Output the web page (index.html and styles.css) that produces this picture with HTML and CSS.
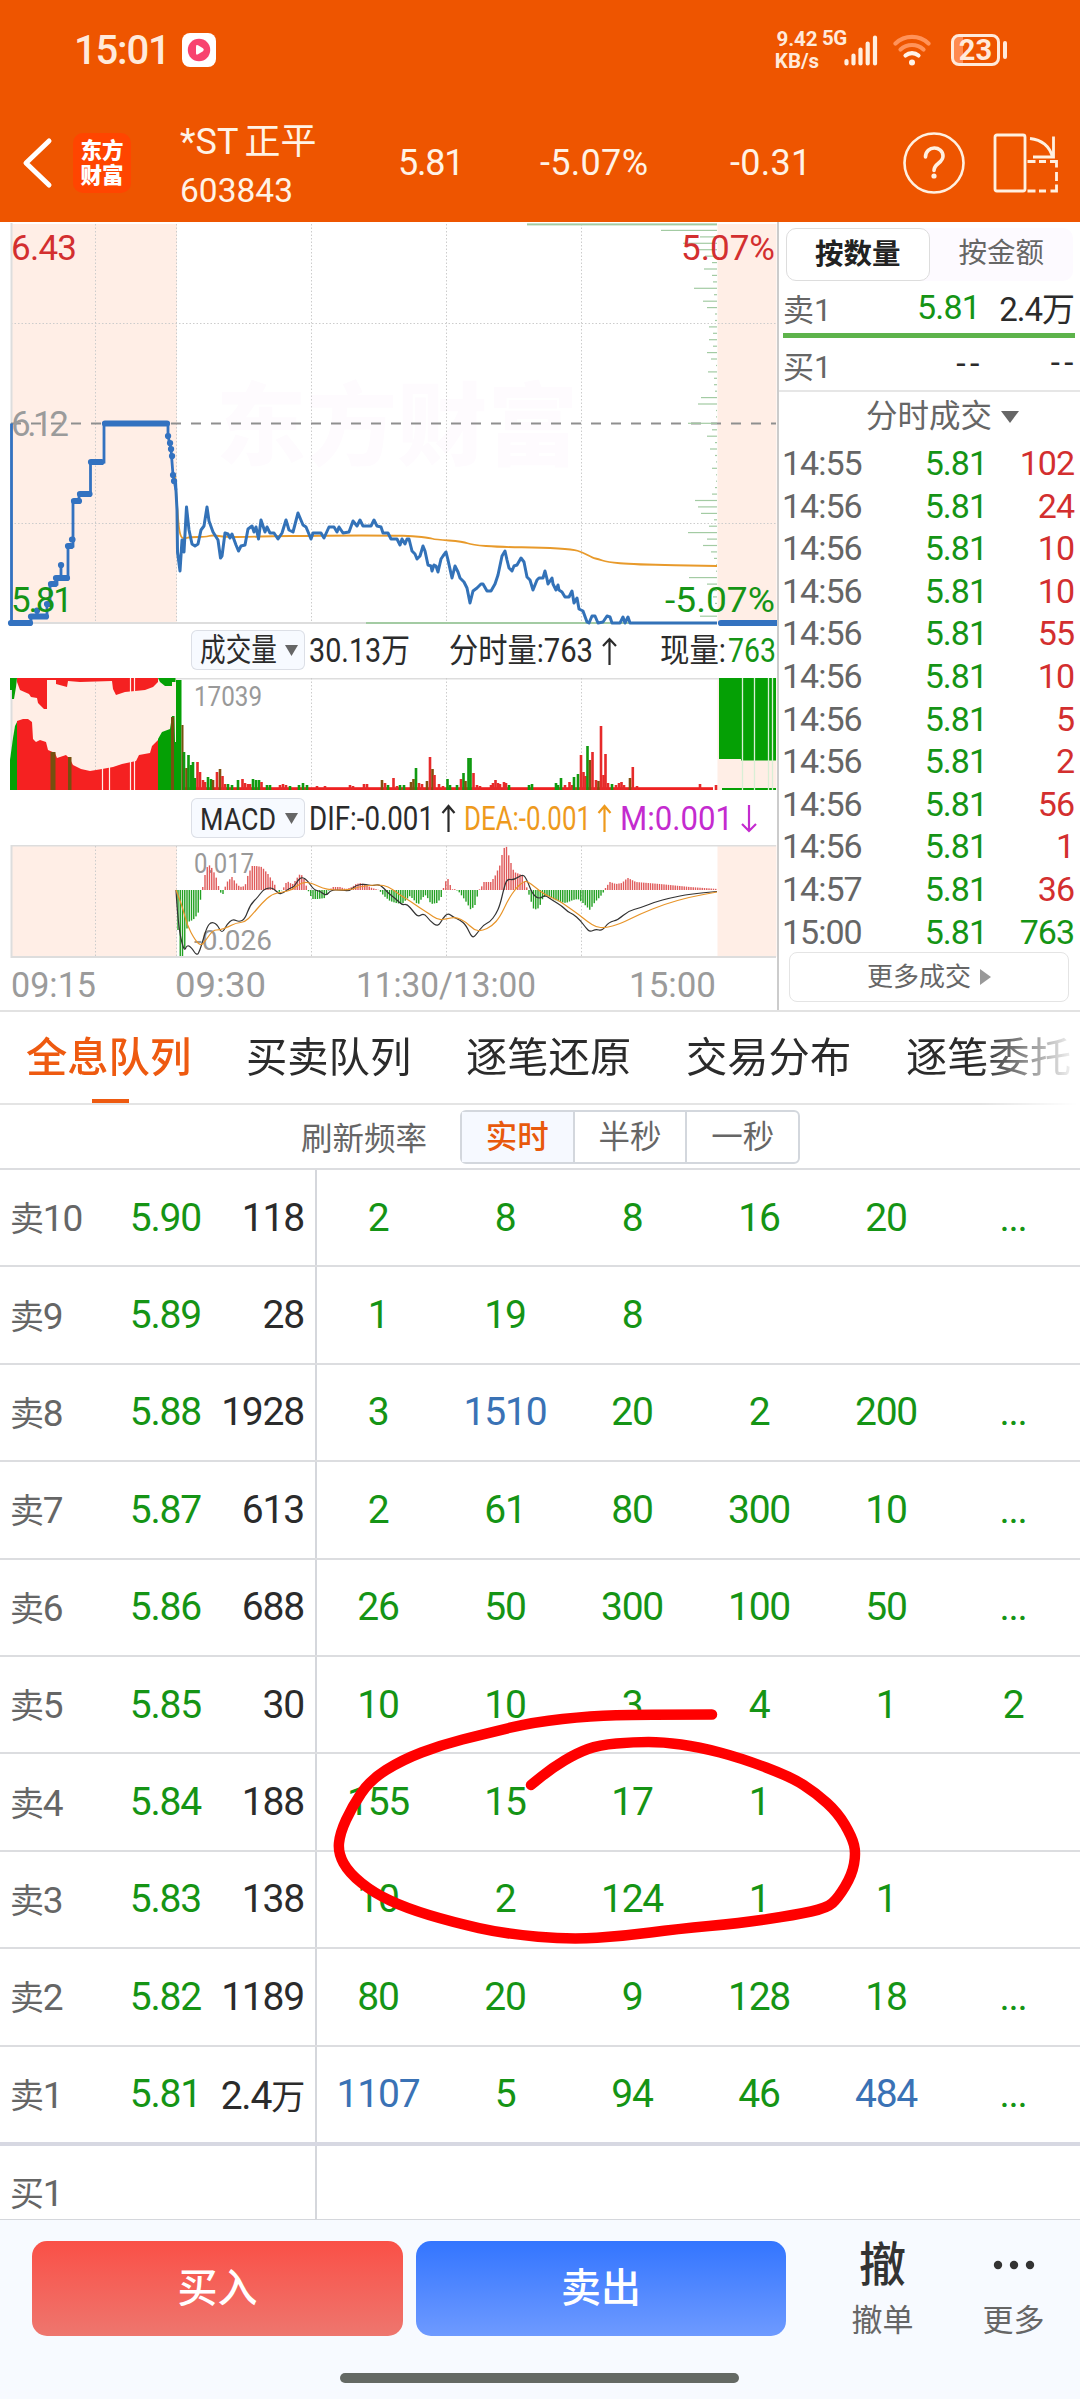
FILE: index.html
```html
<!DOCTYPE html>
<html lang="zh-CN">
<head>
    <meta charset="UTF-8">
    <meta name="viewport" content="width=device-width, initial-scale=1.0">
    <title>*ST正平 603843</title>
    <link rel="stylesheet" href="styles.css">
</head>
<body>

    <header class="header">
        <div class="status">
            <span class="clock">15:01</span>
            <svg class="app-icon" width="34" height="34" viewBox="0 0 34 34">
                <rect width="34" height="34" rx="8" fill="#fff"/>
                <circle cx="17" cy="17" r="11.2" fill="#f8436f"/>
                <path d="M14 13.5 q0-2 2-1.2 l5 3 q1.700 1.500 0 3 l-5 3 q-2 1-2-1z" fill="#fff"/>
            </svg>
            <div class="speed"><span>9.42</span><span>KB/s</span></div>
            <span class="net">5G</span>
            <svg class="signal" width="34" height="32" viewBox="0 0 34 32" stroke="#ffefe0" stroke-width="4.200" stroke-linecap="round">
                <path d="M2.500 27v2.500M9.500 21.500v8M16.500 15.500v14M23.700 9.500v20M31 3.500v26"/>
            </svg>
            <svg class="wifi" width="38" height="32" viewBox="0 0 38 32" fill="none" stroke-width="4.200" stroke-linecap="round">
                <path d="M2.500 9.500a24 24 0 0 1 33 0" stroke="#ff935a"/>
                <path d="M7.500 15.500a17 17 0 0 1 23 0" stroke="#ff935a"/>
                <path d="M12.500 21.500a10 10 0 0 1 13 0" stroke="#fff4ea"/>
                <circle cx="19" cy="28.500" r="3" fill="#fff4ea"/>
            </svg>
            <div class="battery">23</div>
            <i class="nub"></i>
        </div>

        <div class="title-bar">
            <svg class="back" width="32" height="52" viewBox="0 0 32 52" fill="none" stroke="#fff" stroke-width="5" stroke-linecap="round" stroke-linejoin="round">
                <path d="M27 4 L4 26 L27 48"/>
            </svg>
            <div class="logo"><span>东方</span><span>财富</span></div>
            <div class="stock">
                <div class="name">*ST 正平</div>
                <div class="code">603843</div>
            </div>
            <span class="quote">5.81</span>
            <span class="quote wide">-5.07%</span>
            <span class="quote wide">-0.31</span>
            <svg class="help" width="62" height="62" viewBox="0 0 62 62" fill="none" stroke="#fff0e0" stroke-width="2.600">
                <circle cx="31" cy="31" r="29.500"/>
                <path d="M22.500 25 c0-12 17.500-11.500 17.500-1 c0 7.500-9 7-9 14.500" stroke-width="3.600" stroke-linecap="round"/>
                <circle cx="31" cy="44" r="2.600" fill="#fff0e0" stroke="none"/>
            </svg>
            <svg width="66" height="62" viewBox="0 0 66 62" fill="none" stroke="#fff0e0" stroke-width="2.800">
                <rect x="2" y="3" width="30" height="56" rx="2"/>
                <path d="M37 6.500 C50 8 57 16 59.500 25 M60.500 4.500 V25 H40"/>
                <path d="M34.500 29.500 h8M46 29.500h7M57 29.500h6.500v6M63.500 40v9M63.500 52.500v6.500h-6M53 59h-7M42.500 59h-8"/>
            </svg>
        </div>
    </header>

    <main class="market">
        <section class="charts">
            <svg class="chart" id="price" width="777" height="404" viewBox="0 223 777 404">
                <rect x="11" y="224" width="166" height="399" fill="#ffeee6"/>
                <rect x="717.500" y="224" width="59" height="399" fill="#ffeee6"/>
                <text class="watermark" x="216" y="458" textLength="362">东方财富</text>
                <path class="grid" d="M11 323.500H776M11 523.500H776M95.500 224V623M176.500 224V623M311.500 224V623M446.500 224V623M581.500 224V623"/>
                <path class="frame" d="M11.500 223V623H366"/>
                <path d="M11 423.500H776" stroke="#8f8f8f" stroke-width="2" stroke-dasharray="10 10"/>
                <path d="M366 623H717" stroke="#a3cba3" stroke-width="2"/>
                <g id="priceLevels"></g>
                <path id="avgLine" fill="none" stroke="#e89a2b" stroke-width="1.800"/>
                <path id="priceLine" fill="none" stroke="#3372b8" stroke-width="3" stroke-linejoin="round"/>
                <path class="auction-line" d="M11.500 423.500V623H31V616.500H47V604H50V584H57V578H68V546H73V501H79V494H90.500V462H104V423.500H168V436L171 449L173 475L176 490 M61 565V578"/>
                <path class="auction-dots" d="M11 623H30M31 616.500H46M37 610.500h.1M47 604h2.500M51 584h4M56 578H67M61 565h.1M68 546h3M72 539.500h.5M74 501h5M80 494H89.500M91 462H101.500M105 423.500H167M168 436h.1M170 443h.1M171 449h.1M172 456h.1M173 475h.1M174 481h.1M721 623H776"/>
                <text class="tick red" x="11" y="260" textLength="66">6.43</text>
                <text class="tick gray" x="11" y="436" textLength="58">6.12</text>
                <text class="tick green" x="11" y="612" textLength="62">5.81</text>
                <text class="tick red" x="681" y="260" textLength="94" lengthAdjust="spacingAndGlyphs">5.07%</text>
                <text class="tick green" x="665" y="612" textLength="110" lengthAdjust="spacingAndGlyphs">-5.07%</text>
            </svg>

            <div class="tool">
                <div class="select">
                    <svg width="114" height="40"><text x="9" y="30.500" textLength="77" lengthAdjust="spacingAndGlyphs">成交量</text><path d="M94 15h13l-6.500 11z"/></svg>
                </div>
                <svg class="legend" width="472" height="51" viewBox="305 627 472 51">
                    <text x="309" y="662" textLength="101" lengthAdjust="spacingAndGlyphs">30.13万</text>
                    <text x="449" y="662" textLength="144" lengthAdjust="spacingAndGlyphs">分时量:763</text>
                    <path class="arrow" d="M609.500 665V639M603 646l6.500-7 6.500 7"/>
                    <text x="660" y="662" textLength="66" lengthAdjust="spacingAndGlyphs">现量:</text>
                    <text class="green" x="728" y="662" textLength="48" lengthAdjust="spacingAndGlyphs">763</text>
                </svg>
            </div>

            <svg class="chart" width="777" height="113" viewBox="0 678 777 113">
                <rect x="11" y="678" width="166" height="112" fill="#ffeee6"/>
                <rect x="717.500" y="678" width="59" height="112" fill="#ffeee6"/>
                <path class="frame" d="M776 678.500H11.500V790"/>
                <path class="grid" d="M95.500 678V790M311.500 678V790M446.500 678V790M581.500 678V790"/>
                <path class="up" d="M17 790V721L23 719H28L32 722L33 739L36 742L40 740L46 742L48 750L55 753L57 758L66 755L70 759L73 765L81 769L90 771L102 769L113 767L122 764L136 761L139 755L150 753L152 746L158 740V790Z"/>
                <path class="up" d="M17 678V682L20 690L29 694L31 697L37 698L38 703L44 709H47V680H56V684L67 687L68 681L80 682L112 681L113 689L116 695L125 692L145 690L153 687L158 682V678Z"/>
                <path class="down" d="M10 790V760L13 738L15 726L17 722V790Z"/>
                <path class="down" d="M158 790V739L162 732L170 729L172 716H174.500L175 742H176V680H181.500V790Z"/>
                <path class="down" d="M10 678V690H12V699H14L16 687L17 678ZM158 678L160 682L165 686H172V682H175.500V678Z"/>
                <path d="M50.500 752h5V790h-5zM68 757h3.500V790h-3.500zM171 717h3V790h-3zM181.500 725h2V790h-2z" fill="#76500f"/>
                <path d="M102.500 768V790M109.500 767V790M130.500 678V790M134.500 678V790" stroke="#ffeee6" stroke-width="1.200"/>
                <path class="down" d="M719 678H776V760.500H741V759H719ZM722 788H776V790H722Z"/>
                <path d="M742.500 678V790M754.500 678V790M768.500 678V790M772.500 678V790" stroke="#d9efd6" stroke-width="1.300"/>
                <g id="volumeBars"></g>
                <text class="tick-s" x="194" y="706" textLength="68" lengthAdjust="spacingAndGlyphs">17039</text>
            </svg>

            <div class="tool tool-macd">
                <div class="select">
                    <svg width="114" height="40"><text x="9" y="32" textLength="76" lengthAdjust="spacingAndGlyphs">MACD</text><path d="M94 15h13l-6.500 11z"/></svg>
                </div>
                <svg class="legend" width="472" height="54" viewBox="305 791 472 54">
                    <text x="309" y="829.500" textLength="125" lengthAdjust="spacingAndGlyphs">DIF:-0.001</text>
                    <path class="arrow" d="M448.500 832V806M442.500 813l6-7 6 7"/>
                    <g class="dea">
                        <text x="464" y="829.500" textLength="127" lengthAdjust="spacingAndGlyphs">DEA:-0.001</text>
                        <path class="arrow" d="M604.500 832V806M598.500 813l6-7 6 7"/>
                    </g>
                    <g class="macd">
                        <text x="620" y="829.500" textLength="113" lengthAdjust="spacingAndGlyphs">M:0.001</text>
                        <path class="arrow" d="M749 805V831M742 824l7 7 7-7"/>
                    </g>
                </svg>
            </div>

            <svg class="chart" width="777" height="113" viewBox="0 845 777 113">
                <rect x="11" y="845" width="166" height="112" fill="#ffeee6"/>
                <rect x="717.500" y="845" width="59" height="112" fill="#ffeee6"/>
                <path class="frame" d="M776 845.500H11.500V957H776"/>
                <path class="grid" d="M95.500 846V956M176.500 846V956M311.500 846V956M446.500 846V956M581.500 846V956"/>
                <text class="tick-s" x="194" y="872.500" textLength="60" lengthAdjust="spacingAndGlyphs">0.017</text>
                <text class="tick-s" x="194" y="950" textLength="78" lengthAdjust="spacingAndGlyphs">-0.026</text>
                <g id="macdBars"></g>
                <path id="difLine" fill="none" stroke="#333" stroke-width="1.200"/>
                <path id="deaLine" fill="none" stroke="#e8952a" stroke-width="1.200"/>
            </svg>

            <svg class="chart" width="777" height="53" viewBox="0 958 777 53">
                <text class="tick gray" x="11" y="996.500" textLength="85" lengthAdjust="spacingAndGlyphs">09:15</text>
                <text class="tick gray" x="175" y="996.500" textLength="91" lengthAdjust="spacingAndGlyphs">09:30</text>
                <text class="tick gray" x="356" y="996.500" textLength="180" lengthAdjust="spacingAndGlyphs">11:30/13:00</text>
                <text class="tick gray" x="629" y="996.500" textLength="87" lengthAdjust="spacingAndGlyphs">15:00</text>
            </svg>
        </section>

        <aside class="side">
            <div class="switch"><span class="on">按数量</span><span>按金额</span></div>
            <div class="best"><span>卖1</span><b class="green">5.81</b><b>2.4万</b></div>
            <div class="ratio"></div>
            <div class="best"><span>买1</span><b class="none">--</b><b class="none">--</b></div>
            <div class="side-title">分时成交<i class="tri-down"></i></div>
            <div class="trades" id="trades"></div>
            <div class="more">更多成交<i class="tri-right"></i></div>
        </aside>
    </main>

    <nav class="tabs">
        <span class="active">全息队列</span>
        <span>买卖队列</span>
        <span>逐笔还原</span>
        <span>交易分布</span>
        <span>逐笔委托</span>
    </nav>

    <div class="refresh">
        <span>刷新频率</span>
        <div class="segment"><span class="on">实时</span><span>半秒</span><span>一秒</span></div>
    </div>

    <section class="queue" id="queue"></section>

    <footer class="footer">
        <div class="buy">买入</div>
        <div class="sell">卖出</div>
        <div class="action"><strong>撤</strong><span>撤单</span></div>
        <div class="action">
            <svg width="44" height="48" viewBox="0 0 44 48" fill="#333"><circle cx="6" cy="24" r="4.200"/><circle cx="22" cy="24" r="4.200"/><circle cx="38" cy="24" r="4.200"/></svg>
            <span>更多</span>
        </div>
        <i class="home"></i>
    </footer>

    <svg class="marker" width="560" height="260" viewBox="320 1690 560 260">
        <path id="markerPath" fill="none" stroke="#ff0000" stroke-width="10.500" stroke-linecap="round" stroke-linejoin="round"/>
    </svg>

    <script src="script.js"></script>
</body>
</html>
```

FILE: styles.css
```css
* {
    box-sizing: border-box;
}
body {
    margin: 0;
    width: 1080px;
    height: 2400px;
    position: relative;
    overflow: hidden;
    background: #fff;
    color: #2b2b2b;
    font-family: Roboto, "Noto Sans CJK SC", sans-serif;
}
i {
    display: block;
    font-style: normal;
}
svg {
    display: block;
    flex: none;
}

/* header */
.header {
    height: 222px;
    background: #ee5500;
    color: #fff3e6;
}
.status {
    height: 100px;
    padding: 0 0 0 74px;
    display: flex;
    align-items: center;
}
.clock {
    width: 108px;
    font-size: 40px;
    font-weight: 500;
    letter-spacing: -1.2px;
    color: #ffeadb;
}
.speed {
    margin-left: 556px;
    width: 50px;
    display: flex;
    flex-direction: column;
    font-size: 20.5px;
    line-height: 22.5px;
    font-weight: 700;
    text-align: center;
    color: #ffeadb;
}
.net {
    width: 22px;
    font-size: 20.5px;
    font-weight: 700;
    margin-bottom: 24px;
    letter-spacing: -0.5px;
    color: #ffeadb;
}
.wifi {
    margin-left: 15px;
}
.battery {
    margin-left: 20px;
    width: 49px;
    height: 32px;
    border: 3px solid #ffeadb;
    border-radius: 8px;
    font-size: 29px;
    line-height: 27px;
    font-weight: 700;
    text-align: center;
    color: #ffeadb;
    background: linear-gradient(90deg, #ff8a50 22%, transparent 22%);
}
.nub {
    margin-left: 3px;
    width: 4px;
    height: 18px;
    border-radius: 2px;
    background: #ffeadb;
}
.title-bar {
    height: 122px;
    padding: 6px 0 0 22px;
    display: grid;
    grid-template-columns: 51px 107px 218px 142px 190px 173px 90px 70px;
    align-items: center;
}
.title-bar > * {
    margin-top: -3px;
}
.logo {
    width: 58px;
    height: 60px;
    border-radius: 10px;
    background: #ff4500;
    display: flex;
    flex-direction: column;
    align-items: center;
    justify-content: center;
    font-size: 21.5px;
    line-height: 25px;
    font-weight: 900;
    color: #fff;
}
.stock {
    padding-top: 11px;
}
.name {
    font-size: 36px;
    line-height: 46px;
    word-spacing: -2px;
}
.code {
    font-size: 33.5px;
    line-height: 52px;
}
.quote {
    font-size: 36px;
    letter-spacing: -1.2px;
}
.quote.wide {
    letter-spacing: 0.3px;
}

/* charts */
.market {
    height: 790px;
    padding-top: 1px;
    display: flex;
    border-bottom: 2px solid #e2e2e2;
}
.charts {
    width: 777px;
}
.grid {
    stroke: #ccc;
    stroke-width: 1;
    stroke-dasharray: 1.5 2;
    fill: none;
}
.frame {
    stroke: #ddd;
    stroke-width: 2;
    fill: none;
}
.auction-line {
    stroke: #3372c0;
    stroke-width: 2.8;
    fill: none;
}
.auction-dots {
    stroke: #3372c0;
    stroke-width: 6.2;
    stroke-linecap: round;
    fill: none;
}
.watermark {
    font-size: 90px;
    font-weight: 900;
    fill: #fefbfe;
}
.tick {
    font-size: 35px;
    fill: #9b9b9b;
}
.tick-s {
    font-size: 28px;
    fill: #999;
}
.red {
    color: #d32f2f;
}
.green {
    color: #159415;
}
.blue {
    color: #3a72b5;
}
text.red {
    fill: #d32f2f;
}
text.green,
.legend text.green {
    fill: #159415;
}
.up {
    fill: #f52121;
}
.down {
    fill: #05a005;
}
.tool {
    height: 51px;
    padding-left: 191px;
    display: flex;
    align-items: flex-start;
}
.tool-macd {
    height: 54px;
}
.select {
    width: 114px;
    height: 40px;
    margin-top: 3px;
    border-radius: 6px;
    background: #f7faff;
    box-shadow: inset 0 0 0 1px #dcdfe6;
}
.tool-macd .select {
    margin-top: 7px;
}
.select text {
    font-size: 32px;
    fill: #2b2b2b;
}
.select path {
    fill: #666;
}
.legend text {
    font-size: 32.5px;
    fill: #2b2b2b;
}
.arrow {
    fill: none;
    stroke: #2b2b2b;
    stroke-width: 2.2;
}
.legend .dea text {
    fill: #ee9a1d;
}
.dea .arrow {
    stroke: #ee9a1d;
}
.legend .macd text {
    fill: #c42bcf;
}
.macd .arrow {
    stroke: #c42bcf;
}

/* right side */
.side {
    width: 303px;
    margin-top: -1px;
    border-left: 2px solid #ccc;
    padding-left: 4px;
}
.switch {
    margin: 6px 0 0 3px;
    width: 287px;
    height: 53px;
    display: flex;
    border-radius: 10px;
    background: #fdfaff;
    font-size: 28.5px;
    line-height: 52px;
    text-align: center;
    color: #666;
}
.switch span {
    width: 144px;
}
.switch .on {
    border: 1px solid #ddd;
    border-radius: 10px;
    background: #fff;
    color: #222;
    font-weight: 700;
}
.best {
    height: 52px;
    padding: 0 6px 0 0;
    display: grid;
    grid-template-columns: 90px 107px 1fr;
    align-items: center;
    font-size: 31px;
    color: #666;
}
.best b {
    font-size: 34px;
    font-weight: 400;
    text-align: right;
    color: #2b2b2b;
    letter-spacing: -1px;
    white-space: nowrap;
}
.best b.green {
    color: #159415;
    letter-spacing: -0.8px;
}
.best b:last-child {
    font-size: 33px;
}
.best b.none {
    padding-bottom: 3px;
    letter-spacing: 4.5px;
    margin-right: -4px;
}
.ratio {
    width: 292px;
    height: 5px;
    background: #5db34b;
}
.side-title {
    margin-left: -4px;
    height: 52px;
    border-top: 2px solid #e6e6e6;
    padding-left: 87px;
    display: flex;
    align-items: center;
    gap: 9px;
    font-size: 31.5px;
    line-height: 50px;
    color: #666;
}
.tri-down {
    border: 9px solid transparent;
    border-top: 12px solid #666;
    border-bottom: 0;
}
.trades {
    height: 511px;
    font-size: 34px;
    line-height: 42.6px;
    letter-spacing: -1px;
}
.trades div {
    display: grid;
    grid-template-columns: 100px 104px 87px;
    text-align: right;
}
.trades span:first-child {
    color: #666;
    text-align: left;
    margin-left: -1px;
}
.more {
    margin: -1px 0 0 6px;
    width: 280px;
    height: 50px;
    border: 1px solid #e4e4e4;
    border-radius: 8px;
    display: flex;
    align-items: center;
    justify-content: center;
    gap: 9px;
    font-size: 26px;
    line-height: 46px;
    color: #666;
}
.tri-right {
    border: 8px solid transparent;
    border-left: 11px solid #999;
    border-right: 0;
}

/* tabs */
.tabs {
    height: 93px;
    padding-left: 26px;
    border-bottom: 2px solid #e4e4e4;
    display: grid;
    grid-template-columns: repeat(5, 220px);
    font-size: 41.3px;
    line-height: 93px;
    -webkit-mask-image: linear-gradient(90deg, #000 980px, transparent 1078px);
    mask-image: linear-gradient(90deg, #000 980px, transparent 1078px);
    overflow: hidden;
}
.tabs .active {
    color: #ee5a10;
    font-weight: 500;
    background: linear-gradient(#ee5a10, #ee5a10) 66px 87px / 37px 4px no-repeat;
}
.refresh {
    height: 64px;
    padding-left: 301px;
    display: flex;
    align-items: center;
    font-size: 31.5px;
    color: #666;
}
.refresh > span {
    width: 159px;
    padding-bottom: 2px;
}
.segment {
    display: flex;
    width: 340px;
    height: 54px;
    border: 2px solid #d3d7dd;
    border-radius: 6px;
    line-height: 51px;
    text-align: center;
}
.segment span {
    flex: 1;
}
.segment span + span {
    border-left: 2px solid #d3d7dd;
}
.segment .on {
    background: #f6f9ff;
    color: #e8590c;
    font-weight: 500;
}

/* queue */
.queue {
    height: 1051px;
    margin-top: -1px;
    padding-top: 1px;
    overflow: hidden;
    background: linear-gradient(#d5d7dc, #d5d7dc) 315px 0 / 2px 100% no-repeat;
}
.row {
    height: 97.4px;
    border-top: 2px solid #dcdde0;
    display: grid;
    grid-template-columns: 85px 116px 103px 11px repeat(6, 127px);
    align-items: center;
    font-size: 39px;
    letter-spacing: -1.2px;
    white-space: nowrap;
}
.row:first-child {
    margin-top: -1px;
}
.row-first-buy {
    border-top: 4px solid #d7d8e2;
}
.label {
    padding: 0 0 2px 10px;
    font-size: 34px;
    color: #666;
}
.label span {
    font-size: 37px;
}
.num {
    text-align: right;
}
.cell {
    text-align: center;
}
.cell:nth-of-type(n) {
    margin-left: -1px;
}
.wan {
    font-size: 34px;
}

/* footer */
.footer {
    height: 180px;
    padding: 21px 0 0 32px;
    border-top: 1px solid #d5d7dc;
    display: flex;
    align-items: flex-start;
    background: #f7faff;
    position: relative;
}
.buy,
.sell {
    width: 371px;
    height: 95px;
    margin-right: 13px;
    border-radius: 15px;
    font-size: 40px;
    line-height: 95px;
    font-weight: 500;
    text-align: center;
    color: #fff;
    background: linear-gradient(#fa5047, #ee766e);
}
.sell {
    width: 370px;
    background: linear-gradient(#3375ff, #6e9aff);
}
.action {
    width: 131px;
    display: flex;
    flex-direction: column;
    align-items: center;
    font-size: 31px;
    line-height: 64px;
    color: #666;
}
.sell + .action {
    margin-left: 18px;
}
.action strong {
    height: 48px;
    font-size: 47px;
    line-height: 48px;
    font-weight: 500;
    color: #333;
}
.home {
    position: absolute;
    left: 340px;
    top: 153px;
    width: 399px;
    height: 10px;
    border-radius: 5px;
    background: #646964;
}
.marker {
    position: absolute;
    left: 320px;
    top: 1690px;
}
```

FILE: script.js
```js
// [time, volume]
const trades = [
    ["14:55", 102], ["14:56", 24], ["14:56", 10], ["14:56", 10], ["14:56", 55], ["14:56", 10],
    ["14:56", 5], ["14:56", 2], ["14:56", 56], ["14:56", 1], ["14:57", 36], ["15:00", 763]
];
document.getElementById("trades").innerHTML = trades.map(([time, vol]) =>
    `<div><span>${time}</span><span class="green">5.81</span><span class="${vol === 763 ? "green" : "red"}">${vol}</span></div>`
).join("");

const queue = [
    ["卖", 10, "5.90", "118", [2, 8, 8, 16, 20, "..."]],
    ["卖", 9, "5.89", "28", [1, 19, 8]],
    ["卖", 8, "5.88", "1928", [3, 1510, 20, 2, 200, "..."]],
    ["卖", 7, "5.87", "613", [2, 61, 80, 300, 10, "..."]],
    ["卖", 6, "5.86", "688", [26, 50, 300, 100, 50, "..."]],
    ["卖", 5, "5.85", "30", [10, 10, 3, 4, 1, 2]],
    ["卖", 4, "5.84", "188", [155, 15, 17, 1]],
    ["卖", 3, "5.83", "138", [10, 2, 124, 1, 1]],
    ["卖", 2, "5.82", "1189", [80, 20, 9, 128, 18, "..."]],
    ["卖", 1, "5.81", "2.4<span class=\"wan\">万</span>", [1107, 5, 94, 46, 484, "..."]],
    ["买", 1, "", "", []]
];
// orders above 400 lots are shown in blue
document.getElementById("queue").innerHTML = queue.map(([side, n, price, vol, cells]) =>
    `<div class="row${side === "买" ? " row-first-buy" : ""}">
        <span class="label">${side}<span>${n}</span></span>
        <span class="num green">${price}</span>
        <span class="num">${vol}</span><i></i>
        ${cells.map(c => `<span class="cell ${c > 400 ? "blue" : "green"}">${c}</span>`).join("")}
    </div>`
).join("");

function toPoints(text) {
    return text.trim().split(/\s+/).map(p => p.split(",").map(Number));
}
function line(id, text) {
    document.getElementById(id).setAttribute("d", "M" + toPoints(text).map(p => p.join(" ")).join("L"));
}
// quadratic curve through the midpoints
function curve(id, text) {
    const p = toPoints(text);
    let d = `M${p[0][0]} ${p[0][1]}`;
    for (let i = 1; i < p.length - 1; i++) {
        d += `Q${p[i][0]} ${p[i][1]} ${(p[i][0] + p[i + 1][0]) / 2} ${(p[i][1] + p[i + 1][1]) / 2}`;
    }
    const end = p[p.length - 1];
    document.getElementById(id).setAttribute("d", d + `L${end[0]} ${end[1]}`);
}

line("priceLine", `175.5,481 177,510 177.5,552 180,571 182,540 184,552 186.5,507 189,530 192,544 195,546 198,544 201,530 204,526 207,507 209,521
213,532 218,540 220.5,558 222,556 225,533 228,534 230,538 232,534 236,545 238.5,551 241,546 245,545 248,529 252,526 254,532 256,527 258.5,539
261,520 265,532 267,527 270,533 274,533 278,539 282,533 286,520 289,530 293,532 298,513 303,525 306,527 311,539 313,533 321,533 324,538 329,527
334,527 337,532 339,527 343,533 349,532 353,521 357,526 360,520 363,526 371,526 374,520 377,526 381,527 383,533 388,533 391,539 397,539 400,545
402,539 405,544 407,539 409,539 412,551 415,554 417,559 420,556 423,546 425,551 428,565 431,566 432,571 434,565 436,566 438,572 441,559 443,556
446,552 448,560 452,578 455,566 458,572 460,578 464,582 467,588 470,603 473,591 477,588 481,584 483,584 487,591 491,591 495,584 498,575 502,556
505,551 507,560 509,568 512,571 514,566 517,565 521,558 524,562 527,577 530,580 533,590 537,580 539,578 543,578 545,571 547,579 548,584 552,578
553,584 556,590 558,585 559,590 562,592 565,597 569,597 572,591 574,603 577,598 579,609 583,611 587,622 589,623 592,616 595,616 598,623 603,622
607,616 610,617 612,623 620,623 623,617 625,623 628,617 630,623 717,623`);

curve("avgLine", `175,475 178,520 180,535 183,539 190,537 205,537 213,535 225,537 250,537 270,536 310,536 330,535.5 393,535.5 413,536 430,538
435,539.5 463,541.5 472,545 500,547 543,547.500 573,549.5 582,552 593,558 598,559 607,562 633,564.5 717,566`);

curve("difLine", `176,890 178,925 184,952 187,945 191,947 197,956 200,950 203,940 207,927 211,922 217,924 222,934 227,924 233,919 239,922 245,919
250,905 258,897 263,890 268,888 273,888 279,894 283,893 290,888 294,887 298,880 302,877 307,880 314,890 320,891 326,896 331,890 340,890 350,891
356,885 365,884 372,886 380,884 388,893 396,899 402,905 407,904 413,911 418,917 424,913 430,921 438,927 443,918 448,913 453,917 460,920 466,925
472,938 476,935 483,925 490,922 496,914 500,905 504,888 507,879 514,880 523,874 527,880 532,893 537,898 541,898 545,895 552,900 562,906 568,912
573,914 580,920 586,928 590,932 596,929 602,931 609,922 618,920 628,911 640,908 655,902 670,898 690,894 717,891.5`);

curve("deaLine", `176,890 182,905 187,925 195,940 201,946 206,940 213,930 220,930 228,927 236,923 245,922 252,915 262,903 272,894 283,892 292,890
302,882 312,883 326,890 350,890 358,887 372,885 384,885 392,889 400,895 410,901 420,908 428,913 438,920 446,919 456,917 466,922 474,930 482,931
492,926 500,917 508,900 516,888 523,882 527,881 535,887 545,895 558,900 568,907 578,914 588,922 596,927 605,928 620,924 640,914 665,904 690,897 717,892`);

curve("markerPath", `712,1714.5 641,1714.5 591,1716 534,1722 484,1734 441,1745 402,1760 370,1780 352,1807 340,1833 338,1853 349,1873 374,1893
406,1908 452,1922 506,1934 570,1939.500 624,1936 677,1929 741,1923 795,1915 827,1908 838,1898 852,1875 856,1853 852,1837 838,1813 816,1793 791,1777
741,1758 699,1747 663,1742 634,1742 599,1745 577,1753 552,1768 531,1785`);

// traded volume per price level, top to bottom
const levels = [190, 56, 17, 34, 20, 12, 5, 13, 5, 4, 23, 3, 14, 10, 2, 2, 8, 4, 8, 4, 10, 6, 1, 9, 3, 3, 2, 16, 19, 1, 1, 29, 5, 10, 2, 7, 2, 1, 5,
    1, 1, 2, 5, 22, 19, 16, 3, 8, 29, 10, 14, 6, 3, 1, 1, 28, 10, 5, 4, 2, 1, 17];
document.getElementById("priceLevels").innerHTML = levels.map((w, i) =>
    `<rect x="${717 - w}" y="${(223.4 + i * 6.43).toFixed(1)}" width="${w}" height="${i ? 1.2 : 2}" fill="#a3cba3"/>`
).join("");

// x, height, color
const volume = `184,38,g 186.5,22,b 188.5,35,g 191,25,g 193,28,g 195,12,g 197.5,28,r 200,18,r 203,10,r 205,8,r 208,13,g 211,11,g 213,10,b 217,18,r
220,21,b 222.5,14,r 225,6,r 228,6,g 232,5,g 238,10,g 242.5,11,r 245,7,r 248,6,r 250,6,r 253,11,g 256,10,g 259,10,g 261.5,8,r 267,5,g 270,5,g 280,5,r
283,6,r 286,5,r 290,4,g 299,5,g 303,7,g 307,5,g 317,4,r 325,4,r 350,5,r 353,4,r 364,6,r 367,6,r 382,10,b 385,7,r 388,5,g 393.5,12,r 397,4,r
400,5,g 404,5,g 411,8,b 413.5,11,b 416,22,g 419,7,r 422,6,r 427,9,b 430,33,r 432.5,21,b 434.5,15,r 439,6,r 443,4,r 447.5,11,g 450,5,g 457,5,g
461,11,r 463.5,17,g 465.5,9,b 468.5,32,g 470.5,32,g 473.5,17,r 477,5,r 480,4,r 491,5,r 493,7,r 495.5,10,r 498,7,r 500,6,r 504,8,r 506,7,r 509,5,g
529,5,g 532,6,g 556,7,g 558,5,g 561,12,g 565,5,r 569.5,8,r 572,5,r 574,13,g 578,16,g 581,35,r 583.5,18,r 585.5,14,r 587.5,44,g 590,30,b 592.5,38,r
596,10,r 598.5,9,b 601,64,r 603.5,15,r 605.5,36,r 608,7,r 612,6,g 616,5,r 619,7,r 621.5,8,r 624,5,r 630,12,b 632.8,23,r 637,4,r 700,6,r 716,5,r`;
const colors = { r: "#e62a2a", g: "#109a10", b: "#80500f" };
document.getElementById("volumeBars").innerHTML =
    `<rect x="183" y="787.200" width="530" height="2.800" fill="#ee2222"/>` +
    volume.trim().split(/\s+/).map(v => {
        const [x, h, c] = v.split(",");
        return `<rect x="${x - 1.3}" y="${790 - h}" width="2.600" height="${h}" fill="${colors[c]}"/>`;
    }).join("");

// histogram outline, one bar every 2.25px
const macd = toPoints(`177,-20 179,-60 180,-66 184,-66 186,-45 188,-32 193,-30 198,-24 200,-13 202,0 204,8 206,22 210,25 213,20 216,13 218,8 219,0
221,-3 222.5,-6 224,0 227,8 232,13 236,7 240,3 245,4 248,15 252,24 256,24 262,23 268,16 274,7 277,0 279,-2 281,-1 284,3 287,9 290,7 293,6 297,12
300,16 303,14 306,5 308,0 310,-5 313,-9 318,-9 325,-8 329,0 333,3 340,3 346,1 352,3 356,6 361,7 366,5 372,2 379,0 384,-6 390,-11 396,-13 402,-14
406,-10 410,-6 414,-10 418,-15 422,-8 426,-5 431,-14 437,-13 441,-8 443,0 445,8 448,11 451,3 453,0 455,1 459,-2 465,-10 471,-20 475,-15 479,0
482,4 484,8 491,8 495,14 500,25 503,40 506,45 510,30 514,18 522,15 527,2 530,-8 534,-20 539,-18 543,-8 548,-5 553,-9 560,-12 566,-13 573,-10
578,-9 583,-13 590,-20 595,-12 600,-7 603,-3 606,3 610,8 616,6 622,7 625,10 628,12 636,8 660,6 690,3 718,1`);
let bars = "";
for (let x = 178, i = 0; x < 717; x += 2.25) {
    while (macd[i + 1][0] < x) i++;
    const [x0, h0] = macd[i];
    const [x1, h1] = macd[i + 1];
    const h = h0 + (h1 - h0) * (x - x0) / (x1 - x0);
    bars += `<rect x="${x - 0.7}" y="${h > 0 ? 890 - h : 890}" width="1.400" height="${Math.abs(h)}" fill="${h > 0 ? "#e05a5a" : "#22a022"}"/>`;
}
document.getElementById("macdBars").innerHTML = bars;
```
